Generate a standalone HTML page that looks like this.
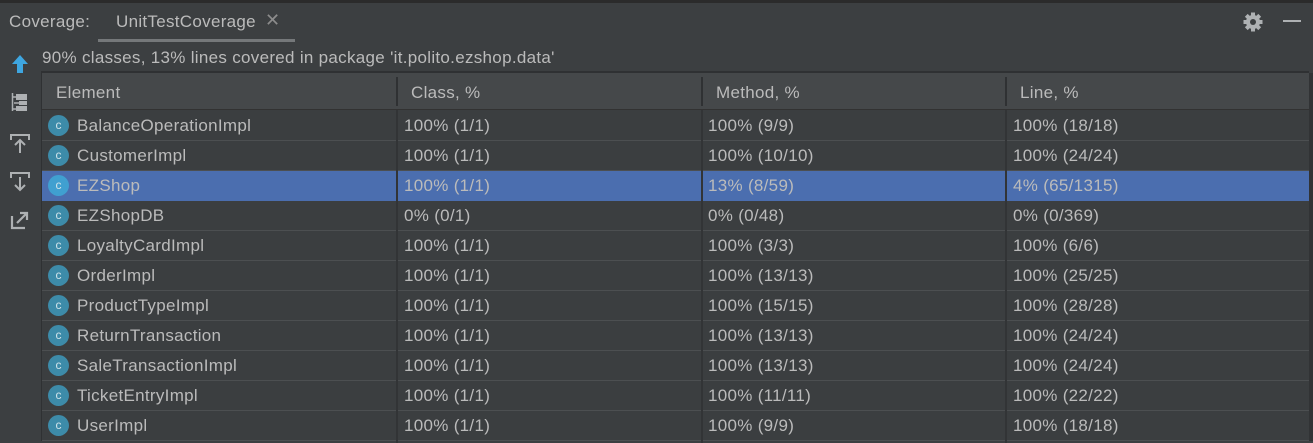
<!DOCTYPE html>
<html><head><style>
*{margin:0;padding:0;box-sizing:border-box}
body{width:1313px;height:441px;background:#3c3f41;font-family:"Liberation Sans",sans-serif;color:#bbbbbb;font-size:17px;letter-spacing:0.3px;position:relative;overflow:hidden}
.top{position:absolute;left:0;top:0;width:1313px;height:3px;background:#2b2b2b}
.hdr{position:absolute;left:0;top:3px;width:1313px;height:38px}
.cov{position:absolute;left:9px;top:9px}
.tab{position:absolute;left:116px;top:9px}
.x{position:absolute;left:265px;top:7px;color:#8c8c8c;font-size:18px}
.tabline{position:absolute;left:98px;top:36px;width:197px;height:3px;background:#75787a}
.sum{position:absolute;left:42px;top:48px}
.tbl{position:absolute;left:41px;top:71px;width:1268px;height:370px;border-top:2px solid #2f3133;border-left:1px solid #2f3133;background:#3b3e40}
.head{position:absolute;left:0;top:0;width:1267px;height:37px;background:#45484a;border-bottom:1px solid #323232}
.head span{position:absolute;top:10px}
.hs{position:absolute;top:4px;width:2px;height:29px;background:#2f3133}
.row{position:absolute;left:0;width:1267px;height:30px;border-bottom:1px solid #4c4f51}
.row span{position:absolute;top:5px}
.sel{background:#4b6eaf;border-bottom-color:#4b6eaf}
.ic{position:absolute;left:6px;top:4px;width:21px;height:21px;border-radius:50%;background:#3d8ba9;color:#cfe3ea;font-size:12px;text-align:center;line-height:20px;letter-spacing:0}
.sel .ic{background:#40a0d0}
.vs{position:absolute;top:37px;width:2px;height:333px;background:#323436}
.sb{position:absolute;left:1309px;top:73px;width:4px;height:368px;background:#313335}
</style></head><body>
<div class="top"></div>
<div class="hdr">
<div class="cov">Coverage:</div>
<div class="tab">UnitTestCoverage</div>
<div class="x">✕</div>
<div class="tabline"></div>
</div>
<svg style="position:absolute;left:1242px;top:11px" width="22" height="22" viewBox="0 0 22 22"><g fill="#aeb1b3"><circle cx="11" cy="11" r="7"/><rect x="9" y="1.5" width="4" height="19"/><rect x="1.5" y="9" width="19" height="4"/><rect x="9" y="1.5" width="4" height="19" transform="rotate(45 11 11)"/><rect x="9" y="1.5" width="4" height="19" transform="rotate(-45 11 11)"/></g><circle cx="11" cy="11" r="3" fill="#3c3f41"/></svg>
<div style="position:absolute;left:1283px;top:20px;width:18px;height:2px;background:#aeb1b3"></div>
<svg style="position:absolute;left:10px;top:54px" width="20" height="20"><path d="M10 1 L18 10 L13 10 L13 19 L7 19 L7 10 L2 10Z" fill="#3ea6e0"/></svg>
<svg style="position:absolute;left:11px;top:92px" width="18" height="20" fill="none" stroke="#aeb1b3" stroke-width="1.5"><path d="M1.5 1V19M1.5 5H5M1.5 17H5"/><rect x="5" y="2" width="11" height="6" fill="#aeb1b3" stroke="none"/><rect x="8" y="9" width="8" height="4" fill="#aeb1b3" stroke="none"/><rect x="5" y="14" width="11" height="5" fill="#aeb1b3" stroke="none"/><path d="M3 11H8"/></svg>
<svg style="position:absolute;left:10px;top:133px" width="20" height="22" fill="none" stroke="#aeb1b3" stroke-width="2"><path d="M1 7V2H19V7M10 20V7M5 12L10 7L15 12"/></svg>
<svg style="position:absolute;left:10px;top:171px" width="20" height="22" fill="none" stroke="#aeb1b3" stroke-width="2"><path d="M1 7V2H19V7M10 6V19M5 14L10 19L15 14"/></svg>
<svg style="position:absolute;left:10px;top:210px" width="20" height="20" fill="none" stroke="#aeb1b3" stroke-width="2.2"><path d="M2 6V18H15M7 13L17 3M10 3H17V10"/></svg>
<div class="sum">90% classes, 13% lines covered in package 'it.polito.ezshop.data'</div>
<div class="tbl">
<div class="head"><span style="left:14px">Element</span><div class="hs" style="left:354px"></div><span style="left:369px">Class, %</span><div class="hs" style="left:659px"></div><span style="left:674px">Method, %</span><div class="hs" style="left:963px"></div><span style="left:978px">Line, %</span></div>
<div class="row" style="top:38px"><div class="ic">c</div><span style="left:35px">BalanceOperationImpl</span><span style="left:362px">100% (1/1)</span><span style="left:666px">100% (9/9)</span><span style="left:971px">100% (18/18)</span></div>
<div class="row" style="top:68px"><div class="ic">c</div><span style="left:35px">CustomerImpl</span><span style="left:362px">100% (1/1)</span><span style="left:666px">100% (10/10)</span><span style="left:971px">100% (24/24)</span></div>
<div class="row sel" style="top:98px"><div class="ic">c</div><span style="left:35px">EZShop</span><span style="left:362px">100% (1/1)</span><span style="left:666px">13% (8/59)</span><span style="left:971px">4% (65/1315)</span></div>
<div class="row" style="top:128px"><div class="ic">c</div><span style="left:35px">EZShopDB</span><span style="left:362px">0% (0/1)</span><span style="left:666px">0% (0/48)</span><span style="left:971px">0% (0/369)</span></div>
<div class="row" style="top:158px"><div class="ic">c</div><span style="left:35px">LoyaltyCardImpl</span><span style="left:362px">100% (1/1)</span><span style="left:666px">100% (3/3)</span><span style="left:971px">100% (6/6)</span></div>
<div class="row" style="top:188px"><div class="ic">c</div><span style="left:35px">OrderImpl</span><span style="left:362px">100% (1/1)</span><span style="left:666px">100% (13/13)</span><span style="left:971px">100% (25/25)</span></div>
<div class="row" style="top:218px"><div class="ic">c</div><span style="left:35px">ProductTypeImpl</span><span style="left:362px">100% (1/1)</span><span style="left:666px">100% (15/15)</span><span style="left:971px">100% (28/28)</span></div>
<div class="row" style="top:248px"><div class="ic">c</div><span style="left:35px">ReturnTransaction</span><span style="left:362px">100% (1/1)</span><span style="left:666px">100% (13/13)</span><span style="left:971px">100% (24/24)</span></div>
<div class="row" style="top:278px"><div class="ic">c</div><span style="left:35px">SaleTransactionImpl</span><span style="left:362px">100% (1/1)</span><span style="left:666px">100% (13/13)</span><span style="left:971px">100% (24/24)</span></div>
<div class="row" style="top:308px"><div class="ic">c</div><span style="left:35px">TicketEntryImpl</span><span style="left:362px">100% (1/1)</span><span style="left:666px">100% (11/11)</span><span style="left:971px">100% (22/22)</span></div>
<div class="row" style="top:338px"><div class="ic">c</div><span style="left:35px">UserImpl</span><span style="left:362px">100% (1/1)</span><span style="left:666px">100% (9/9)</span><span style="left:971px">100% (18/18)</span></div>
<div class="vs" style="left:354px"></div><div class="vs" style="left:659px"></div><div class="vs" style="left:963px"></div>
</div>
<div class="sb"></div>
</body></html>
